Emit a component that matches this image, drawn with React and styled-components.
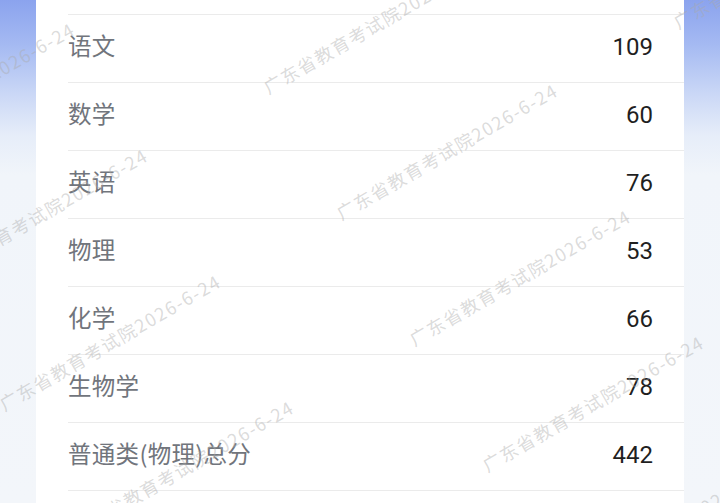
import styled, { createGlobalStyle } from 'styled-components'

const scores = [
  { name: '语文', value: 109 },
  { name: '数学', value: 60 },
  { name: '英语', value: 76 },
  { name: '物理', value: 53 },
  { name: '化学', value: 66 },
  { name: '生物学', value: 78 },
  { name: '普通类(物理)总分', value: 442 },
]

const WATERMARK = '广东省教育考试院2026-6-24'

// lattice of the watermark tiles (top-left of each text box)
const origin = [333, 206]
const along = [337, -191]
const across = [73, 126]

function watermarkSpots() {
  const spots = []
  for (let i = -3; i <= 3; i++) {
    for (let j = -5; j <= 6; j++) {
      const x = origin[0] + i * along[0] + j * across[0]
      const y = origin[1] + i * along[1] + j * across[1]
      if (x > -320 && x < 740 && y > -40 && y < 680) spots.push({ x, y, key: `${i}_${j}` })
    }
  }
  return spots
}

function App() {
  return (
    <Page>
      <GlobalStyle />
      <Card>
        <List>
          {scores.map((s) => (
            <Row key={s.name}>
              <Label>{s.name}</Label>
              <Value>{s.value}</Value>
            </Row>
          ))}
        </List>
      </Card>
      <Watermarks aria-hidden="true">
        {watermarkSpots().map((p) => (
          <Mark key={p.key} style={{ left: p.x, top: p.y }}>
            {WATERMARK}
          </Mark>
        ))}
      </Watermarks>
    </Page>
  )
}

export default App

/* ===== styles ===== */

const GlobalStyle = createGlobalStyle`
  html, body {
    margin: 0;
    padding: 0;
  }
  body {
    font-family: Roboto, "Noto Sans CJK SC", sans-serif;
    background: #f3f6fa;
  }
`

const Page = styled.div`
  position: relative;
  min-height: 100vh;
  overflow: hidden;
  display: flex;
  justify-content: center;
  background: linear-gradient(
    180deg,
    #8ba3ee 0px,
    #a5baf2 45px,
    #cbd8f6 95px,
    #e6edf9 135px,
    #f1f5fa 175px,
    #f3f6fa 100%
  );
`

const Card = styled.div`
  width: 648px;
  min-height: 100vh;
  background: #fff;
  padding-top: 14px;
  box-sizing: border-box;
`

const List = styled.div`
  display: flex;
  flex-direction: column;
  margin-left: 32px;
  border-bottom: 1px solid #ebebeb;
`

const Row = styled.div`
  height: 68px;
  box-sizing: border-box;
  border-top: 1px solid #ebebeb;
  display: flex;
  align-items: center;
  justify-content: space-between;
  padding: 0 31px 3px 0;
`

const Label = styled.span`
  font-size: 23.5px;
  line-height: 1;
  letter-spacing: 0.3px;
  color: #71757c;
  font-family: "Noto Sans CJK SC", sans-serif;
  margin-bottom: 2px;
`

const Value = styled.span`
  font-size: 24px;
  line-height: 1;
  color: #1f1f1f;
  font-family: Roboto, sans-serif;
`

const Watermarks = styled.div`
  position: absolute;
  inset: 0;
  pointer-events: none;
  overflow: hidden;
`

const Mark = styled.span`
  position: absolute;
  white-space: nowrap;
  font-family: "Noto Sans CJK SC", sans-serif;
  font-size: 18px;
  line-height: 1;
  letter-spacing: 1.5px;
  color: rgba(170, 170, 170, 0.42);
  transform-origin: 0 0;
  transform: rotate(-30deg);
`
